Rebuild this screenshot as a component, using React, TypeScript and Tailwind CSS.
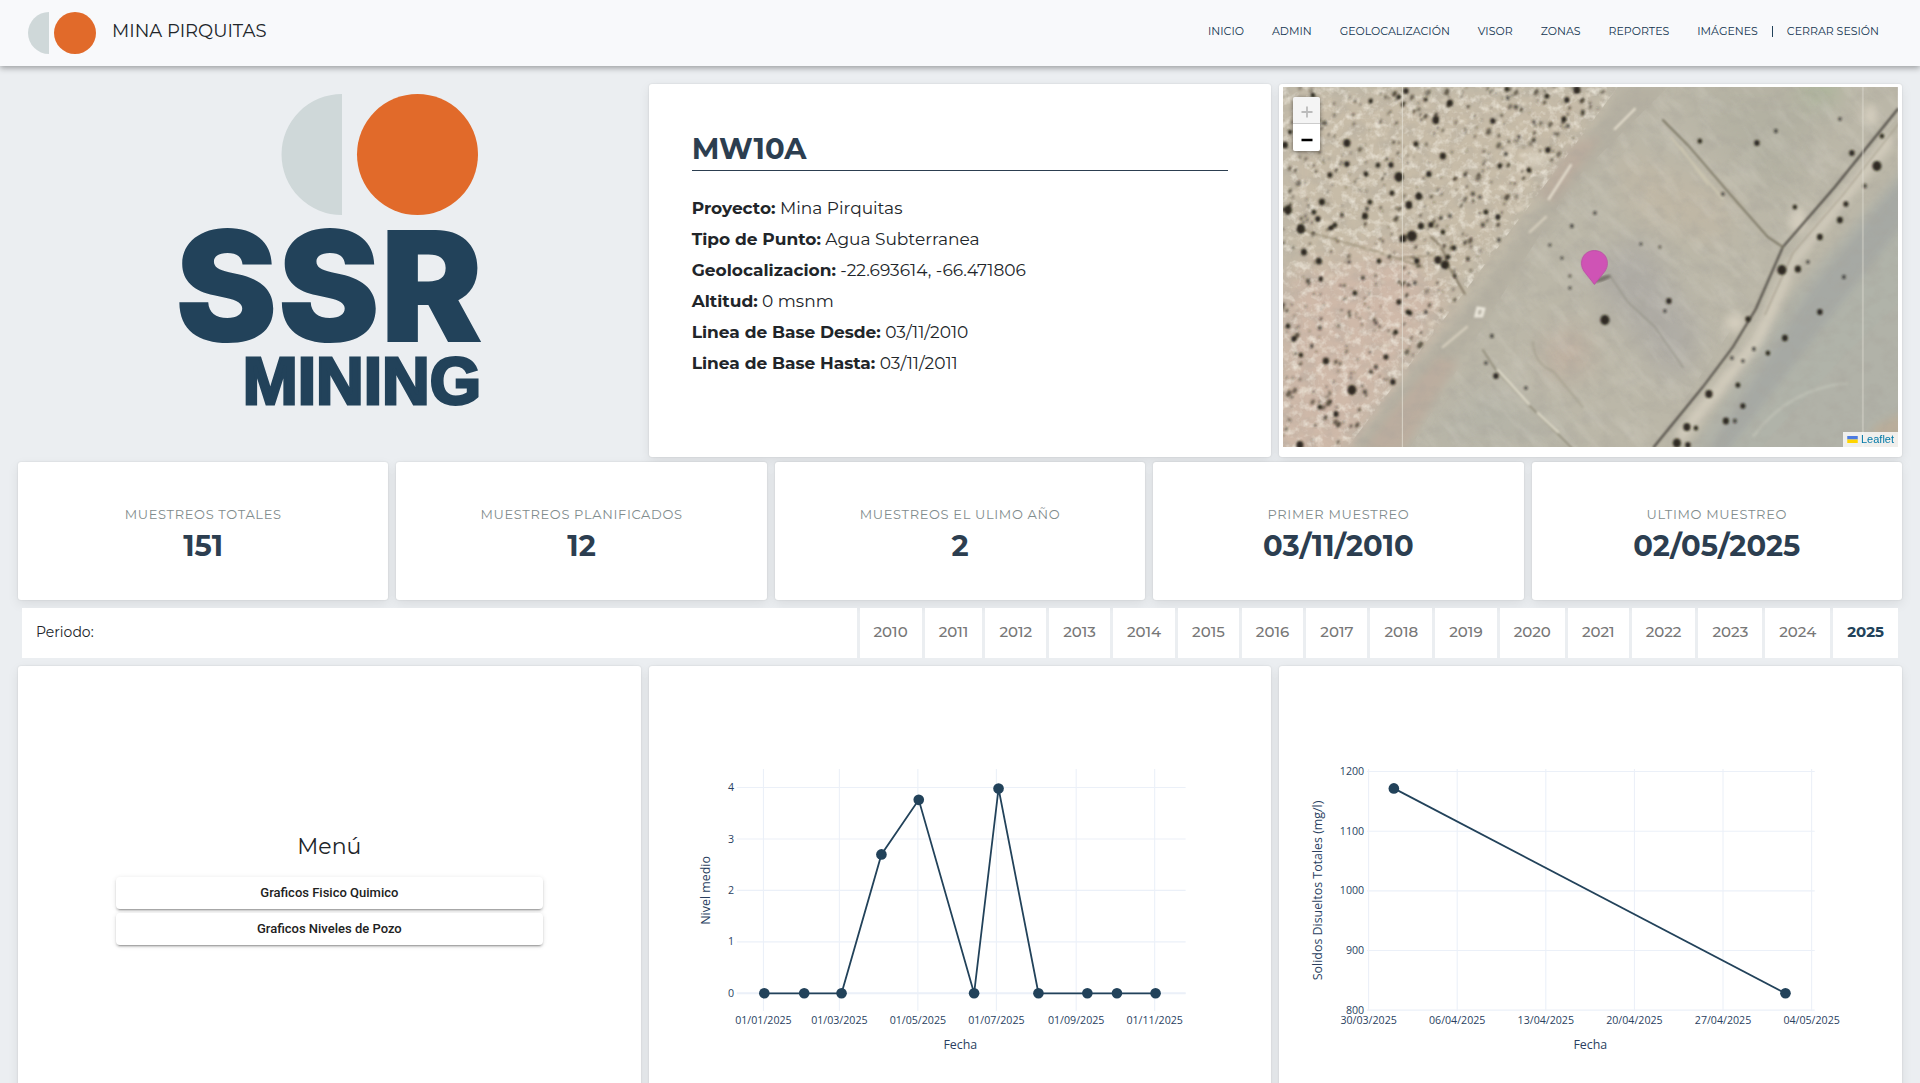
import { useMemo } from "react";

const NAV_LINKS = ["Inicio", "Admin", "Geolocalización", "Visor", "Zonas", "Reportes", "Imágenes"];

const DETAILS = [
  { label: "Proyecto", value: "Mina Pirquitas" },
  { label: "Tipo de Punto", value: "Agua Subterranea" },
  { label: "Geolocalizacion", value: "-22.693614, -66.471806" },
  { label: "Altitud", value: "0 msnm" },
  { label: "Linea de Base Desde", value: "03/11/2010" },
  { label: "Linea de Base Hasta", value: "03/11/2011" },
];

const STATS = [
  { label: "Muestreos totales", value: "151" },
  { label: "Muestreos planificados", value: "12" },
  { label: "Muestreos el ulimo año", value: "2" },
  { label: "Primer muestreo", value: "03/11/2010" },
  { label: "Ultimo muestreo", value: "02/05/2025" },
];

const YEARS = Array.from({ length: 16 }, (_, i) => 2010 + i);
const CURRENT_YEAR = 2025;

const CARD =
  "rounded-[3px] bg-white shadow-[0_4px_12px_rgba(0,0,0,0.08),0_0_2px_rgba(0,0,0,0.12)]";

function Navbar() {
  return (
    <header className="relative flex h-[66px] items-center justify-between bg-[#f8f9fb] pr-[41px] pl-7 shadow-[0_2px_6px_rgba(0,0,0,0.35)]">
      <a href="#" className="flex items-center gap-4 text-lg text-[#212529]">
        <svg viewBox="0 0 68 42" className="h-[42px] w-[68px]" aria-hidden="true">
          <path d="M21 0A21 21 0 0 0 21 42Z" fill="#cfd8d9" />
          <circle cx="47" cy="21" r="21" fill="#e16a2a" />
        </svg>
        <span className="pb-1">MINA PIRQUITAS</span>
      </a>
      <nav className="flex items-center pb-1 text-[11px] text-[#12344f] uppercase">
        <ul className="flex gap-7">
          {NAV_LINKS.map((link) => (
            <li key={link}>
              <a href="#">{link}</a>
            </li>
          ))}
        </ul>
        <span className="mx-[14px] h-[11px] w-px bg-[#22425a]" />
        <a href="#">Cerrar sesión</a>
      </nav>
    </header>
  );
}

function CompanyLogo() {
  return (
    <div className="flex justify-center pt-[10px]">
      <svg viewBox="0 0 301 314" className="h-[314px] w-[301px] overflow-visible" role="img" aria-label="SSR Mining">
        <path d="M163 0A60.5 60.5 0 0 0 163 121Z" fill="#cfd8d9" />
        <circle cx="238.500" cy="60.500" r="60.500" fill="#e16a2a" />
        <g fill="#22425a" textAnchor="end">
          <text x="304" y="248" fontSize="154" fontWeight="900" fontFamily="Inter, sans-serif">
            SSR
          </text>
          <text
            x="302"
            y="310"
            fontSize="66"
            fontWeight="700"
            fontFamily="'Liberation Sans', Arial, sans-serif"
            stroke="#22425a"
            strokeWidth="3"
          >
            MINING
          </text>
        </g>
      </svg>
    </div>
  );
}

function PointDetails() {
  return (
    <section className={`${CARD} px-[43px] pt-[46px]`}>
      <h1 className="border-b border-[#2c3e50] pb-[2px] text-[29px] leading-[38px] font-bold text-[#2c3e50]">MW10A</h1>
      <ul className="mt-[22px] text-[17px] leading-[31px] text-[#212529]">
        {DETAILS.map((d) => (
          <li key={d.label}>
            <strong>{d.label}:</strong> {d.value}
          </li>
        ))}
      </ul>
    </section>
  );
}

// Larger bushes, placed by hand: x, y, radius
const BUSHES = [
  [18, 142, 5], [5, 123, 4.5], [64, 56, 4], [153, 33, 4], [160, 69, 3.5], [167, 16, 3.5], [123, 4, 3],
  [136, 109, 4], [126, 118, 4], [116, 90, 5], [108, 78, 3], [146, 87, 3], [129, 149, 5.5], [120, 152, 4],
  [155, 173, 4], [162, 178, 4.5], [21, 165, 3.5], [36, 174, 3.5], [39, 115, 3.5], [35, 132, 3], [82, 129, 3.5],
  [48, 141, 3], [43, 274, 3.5], [69, 303, 5], [110, 295, 3], [18, 268, 2.5], [294, 3, 4], [284, 13, 3], [210, 34, 3],
  [2, 58, 3.5], [7, 45, 2.5], [47, 88, 2.8], [64, 77, 3], [83, 87, 2.8], [138, 139, 3.5], [148, 138, 3],
  [133, 57, 2.8], [160, 145, 2.5], [109, 106, 2.8], [213, 289, 3], [209, 249, 2.2], [203, 276, 2], [17, 358, 4],
  [31, 125, 2.6], [52, 138, 2.6], [59, 128, 2.4], [96, 174, 2.6], [66, 175, 2], [80, 191, 2.4], [38, 192, 2.8],
  [25, 194, 2.4], [5, 239, 2.6], [11, 252, 3], [72, 206, 2.6], [95, 78, 2.6], [84, 122, 2.4], [87, 115, 2.6],
  [171, 161, 2.8], [158, 131, 2.4], [167, 129, 2.4], [203, 125, 2.6], [215, 130, 3], [217, 79, 2.8], [190, 107, 2.4],
  [246, 83, 2.6], [265, 63, 3], [251, 53, 2.4], [223, 67, 2.2], [113, 245, 2.6], [125, 225, 2.6], [143, 225, 2.2],
  [103, 270, 2.8], [93, 280, 2.4], [88, 285, 2.4], [53, 327, 3], [37, 320, 2.6], [82, 305, 2.4], [37, 241, 2.4],
  [29, 259, 2.2], [93, 236, 2], [116, 215, 2.8], [127, 226, 2.6], [134, 174, 3], [172, 189, 2.4], [165, 170, 2.6],
  [132, 196, 2.2], [185, 172, 2.4], [200, 138, 2.4], [216, 153, 2.2], [88, 14, 2.6], [30, 8, 2.6], [42, 36, 2.4],
  [116, 10, 2.6], [143, 13, 2.4], [224, 2, 2.6], [225, 11, 2.2], [233, 20, 2.4], [264, 9, 2.6], [281, 32, 2.8],
  [300, 25, 2.4], [285, 39, 2.4], [251, 35, 2], [236, 50, 2], [182, 88, 2], [197, 110, 2],
  [322, 233, 5], [386, 214, 3], [382, 224, 2], [312, 126, 2], [440, 107, 2], [417, 54, 2.5], [474, 56, 3],
  [493, 44, 2.2], [512, 120, 2.5], [569, 66, 3], [594, 79, 5], [557, 32, 2], [563, 117, 2.8], [557, 133, 3.2],
  [537, 150, 3.2], [499, 183, 5], [515, 182, 3.5], [525, 175, 2], [561, 190, 2.2], [537, 225, 3], [502, 251, 3.2],
  [485, 266, 2.5], [471, 262, 2.2], [465, 232, 2.8], [455, 298, 2.6], [426, 307, 4], [460, 319, 2.8],
  [443, 334, 3.4], [452, 334, 2.4], [404, 340, 4], [413, 341, 2.5], [394, 356, 4.5], [405, 358, 3],
  [449, 271, 2], [460, 274, 2], [599, 49, 2.5], [582, 99, 2.4], [358, 157, 1.8], [377, 160, 1.6],
  [289, 139, 2.2], [267, 158, 1.8], [279, 171, 1.8], [287, 189, 1.6], [287, 201, 1.8], [243, 301, 2],
];

// x of the scrubland's right edge at height y
const scrubEdge = (y: number) => (y < 70 ? 335 - y * 0.75 : 283 - (y - 70) * 0.75);

function SatelliteImage() {
  const { shrubs, stones } = useMemo(() => {
    let seed = 7;
    const rand = () => {
      seed = (seed * 16807) % 2147483647;
      return seed / 2147483647;
    };
    const shrubs: number[][] = [];
    const stones: number[][] = [];
    for (let i = 0; i < 1150; i++) {
      const x = rand() * 335;
      const y = rand() * 360;
      const r = 0.8 + rand() * rand() * 1.8;
      if (x < scrubEdge(y) - 4) (i % 3 === 0 ? stones : shrubs).push([x, y, r, rand()]);
    }
    return { shrubs, stones };
  }, []);

  return (
    <svg viewBox="0 0 615 360" preserveAspectRatio="xMidYMid slice" className="block h-[360px] w-full" aria-hidden="true">
      <defs>
        <filter id="soft"><feGaussianBlur stdDeviation="0.8" /></filter>
        <filter id="haze"><feGaussianBlur stdDeviation="4" /></filter>
        <filter id="broad"><feGaussianBlur stdDeviation="14" /></filter>
        <filter id="grain" x="0" y="0" width="100%" height="100%">
          <feTurbulence type="fractalNoise" baseFrequency="0.06 0.08" numOctaves="4" seed="4" />
          <feColorMatrix values="0 0 0 0 0.38  0 0 0 0 0.36  0 0 0 0 0.32  1.8 0 0 0 -0.75" />
        </filter>
        <filter id="streak" x="0" y="0" width="100%" height="100%">
          <feTurbulence type="fractalNoise" baseFrequency="0.025 0.08" numOctaves="4" seed="9" />
          <feColorMatrix values="0 0 0 0 0.86  0 0 0 0 0.84  0 0 0 0 0.77  2 0 0 0 -0.85" />
        </filter>
        <filter id="glint" x="0" y="0" width="100%" height="100%">
          <feTurbulence type="fractalNoise" baseFrequency="0.12" numOctaves="3" seed="11" />
          <feColorMatrix values="0 0 0 0 0.9  0 0 0 0 0.86  0 0 0 0 0.77  2.4 0 0 0 -1.1" />
        </filter>
        <clipPath id="scrub"><path d="M0 0H335L283 70L65 360H0Z" /></clipPath>
        <clipPath id="field"><path d="M385 0H615V30L500 165L370 360H128L215 215L290 95Z" /></clipPath>
      </defs>
      <rect width="615" height="360" fill="#bbb7a8" />

      <g filter="url(#broad)">
        <path d="M0 0H335L283 70L65 360H0Z" fill="#c7bca8" />
        <path d="M0 190L120 160L165 215L60 380H-20Z" fill="#cfb9a9" />
        <path d="M400 0H560L500 120L440 60Z" fill="#b3b1a2" />
        <path d="M300 180L360 150L420 250L390 300Z" fill="#afaca5" />
        <path d="M260 255L295 240L310 280L270 290Z" fill="#bfae9f" />
        <path d="M130 360L200 290L300 360Z" fill="#b5b4a7" />
        <path d="M330 60L450 110L440 160L350 130Z" fill="#bfb7a5" />
        <circle cx="537" cy="0" r="12" fill="#9db98c" />
      </g>

      {/* dry river bed */}
      <g filter="url(#haze)">
        <path d="M625 75L510 205L400 375H630Z" fill="#b1b2a8" />
        <path d="M622 88L530 200L425 365H446L540 240L622 135Z" fill="#a6a9a4" />
        <path d="M622 135L540 240L440 370H470L560 270L622 210Z" fill="#b0b3a9" />
        <path d="M590 340L620 325V370H588Z" fill="#b9ad9a" />
      </g>
      <path d="M470 350Q505 302 565 296" fill="none" stroke="#bbbdb2" strokeWidth="3" filter="url(#soft)" />

      {/* road */}
      <g filter="url(#haze)">
        <path d="M340 0H386L298 95L222 205L165 285L118 365H66L125 290L195 210L272 100Z" fill="#b5b0a2" />
        <path d="M290 55L318 50L272 115L254 108Z" fill="#bbad9f" />
        <path d="M105 330L155 270L175 275L120 365H80Z" fill="#bbad9f" />
      </g>

      <rect width="615" height="360" filter="url(#grain)" opacity="0.4" />
      <g clipPath="url(#field)">
        <rect x="0" y="-300" width="800" height="800" filter="url(#streak)" opacity="0.2" transform="rotate(48 300 180)" />
      </g>
      <g clipPath="url(#scrub)">
        <rect width="340" height="360" filter="url(#glint)" opacity="0.7" />
      </g>

      {/* pale spots along the track */}
      <g fill="#ddd6c6" filter="url(#haze)" opacity="0.75">
        <ellipse cx="253" cy="72" rx="12" ry="7" />
        <ellipse cx="516" cy="133" rx="9" ry="13" />
        <ellipse cx="452" cy="236" rx="10" ry="9" />
        <ellipse cx="588" cy="28" rx="8" ry="10" />
        <path d="M606 45L505 175L470 250L390 350L400 355L480 255L515 175L612 55Z" />
      </g>

      <g fill="none" strokeLinecap="round" filter="url(#soft)">
        <path d="M615 22L552 100L500 160L473 222L450 260L420 300L371 360" stroke="#4e4a43" strokeWidth="2" />
        <path d="M380 33L405 58L448 108L485 150L500 160" stroke="#77725f" strokeWidth="1.8" />
        <path d="M618 34L560 108L510 166L482 228" stroke="#9b9380" strokeWidth="1" />
        <path d="M200 263L213 283L248 320L290 362" stroke="#8b8673" strokeWidth="1.4" />
        <path d="M215 283L246 317M255 326L275 345" stroke="#e0dccb" strokeWidth="2.2" />
        <path d="M398 60L425 98M388 50L440 112" stroke="#cbc5b0" strokeWidth="2" />
        <path d="M288 78L266 112M352 22L332 42" stroke="#e3dccc" strokeWidth="2.4" />
        <path d="M263 130L247 145M184 240L160 260" stroke="#d3ccbb" strokeWidth="2.6" />
        <path d="M20 143L50 152L95 165L140 180M118 171L150 168" stroke="#9b9078" strokeWidth="1.5" />
        <path d="M148 150Q162 160 165 178L182 207" stroke="#7b705a" strokeWidth="1.6" />
        <path d="M328 190L345 215L372 240L400 280" stroke="#8e8b80" strokeWidth="2" opacity="0.5" />
        <path d="M250 255Q252 278 270 284L300 320" stroke="#8f8b78" strokeWidth="2.4" opacity="0.35" />
        <path d="M195 221L201 222L199 229L193 229Z" stroke="#ebe7db" strokeWidth="3" />
      </g>

      <g filter="url(#soft)">
        {stones.map(([x, y, r], i) => (
          <ellipse key={i} cx={x} cy={y} rx={r * 1.8} ry={r * 1.1} fill="#e6dcc9" opacity="0.5" />
        ))}
        {shrubs.map(([x, y, r, tone], i) => (
          <ellipse
            key={i}
            cx={x}
            cy={y}
            rx={r}
            ry={r * 1.5}
            fill="#352d1e"
            opacity={0.3 + tone * 0.5}
            transform={`rotate(30 ${x} ${y})`}
          />
        ))}
        {BUSHES.map(([x, y, r], i) => (
          <ellipse key={i} cx={x} cy={y} rx={r * 0.9} ry={r} fill="#221f14" opacity={r > 2.4 ? 0.92 : 0.65} />
        ))}
      </g>

      {/* tile seams */}
      <path d="M119.500 0V360M580 0V360" stroke="#e4e0d6" strokeWidth="1" opacity="0.75" />

      <ellipse cx="320" cy="192" rx="9" ry="2.5" fill="#3f3b32" opacity="0.5" filter="url(#soft)" transform="rotate(-20 319 193)" />
      <path
        d="M311.500 163.500C304 163.500 298.500 169 298.500 176.300C298.500 179.500 299.600 181.800 301 184.200L311.500 197.500L322 184.200C323.400 181.800 324.500 179.500 324.500 176.300C324.500 169 319 163.500 311.500 163.500Z"
        fill="#cf53b5"
        stroke="#b94aa2"
        strokeWidth="0.8"
      />
    </svg>
  );
}

function PointMap() {
  return (
    <section className={`${CARD} px-1 pt-[3px] pb-[10px]`}>
      <div className="relative">
        <SatelliteImage />
        <div className="absolute top-[10px] left-[10px] flex w-[27px] flex-col overflow-hidden rounded-[2px] shadow-[0_1px_4px_rgba(0,0,0,0.5)]">
          <button
            type="button"
            aria-label="Acercar"
            disabled
            className="flex h-[27px] items-center justify-center border-b border-[#ccc] bg-[#f4f4f4] pt-1"
          >
            <svg viewBox="0 0 12 12" className="size-3" aria-hidden="true">
              <path d="M6 0.500V11.500M0.500 6H11.500" stroke="#bbb" strokeWidth="1.800" />
            </svg>
          </button>
          <button type="button" aria-label="Alejar" className="flex h-[27px] items-center justify-center bg-white pt-1">
            <svg viewBox="0 0 12 12" className="size-3" aria-hidden="true">
              <path d="M0.500 6H11.500" stroke="#000" strokeWidth="2.500" />
            </svg>
          </button>
        </div>
        <div className="absolute right-0 bottom-0 flex h-[15px] items-center bg-white/80 px-1 font-['Liberation_Sans',sans-serif] text-[11px]">
          <a href="https://leafletjs.com" className="flex items-center gap-[3px] text-[#0078a8]">
            <svg viewBox="0 0 12 8" className="h-[7px] w-[11px]" aria-hidden="true">
              <path fill="#4c7be1" d="M0 0h12v4H0z" />
              <path fill="#ffd500" d="M0 4h12v4H0z" />
            </svg>
            Leaflet
          </a>
        </div>
      </div>
    </section>
  );
}

function StatCard({ label, value }: { label: string; value: string }) {
  return (
    <div className={`${CARD} flex h-[138px] flex-col items-center justify-center pt-[6px] text-center`}>
      <p className="text-[13px] leading-6 tracking-wider text-[#7f8c8d] uppercase">{label}</p>
      <p className="text-[29px] leading-10 font-bold text-[#2c3e50]">{value}</p>
    </div>
  );
}

function PeriodBar() {
  return (
    <div className="my-2 flex h-[50px] gap-[3px] px-1">
      <div className="flex flex-1 items-center bg-white px-[14px] pb-[2px] text-sm text-[#212529]">Periodo:</div>
      {YEARS.map((year) => (
        <button
          key={year}
          type="button"
          className={
            year === CURRENT_YEAR
              ? "bg-white px-[14px] pb-[2px] text-[15px] font-bold text-[#22425a]"
              : "bg-white px-[14px] pb-[2px] text-[15px] font-medium text-[#777]"
          }
        >
          {year}
        </button>
      ))}
    </div>
  );
}

function Menu() {
  return (
    <section className={`${CARD} flex flex-col items-stretch justify-center gap-1 px-[98px] pb-1`}>
      <h2 className="mb-[10px] text-center text-[22px] leading-8 text-[#212529]">Menú</h2>
      {["Graficos Fisico Quimico", "Graficos Niveles de Pozo"].map((item) => (
        <button
          key={item}
          type="button"
          className="h-8 rounded bg-white font-['Roboto',sans-serif] text-[13px] font-medium text-[#212121] shadow-[0_3px_1px_-2px_rgba(0,0,0,0.2),0_2px_2px_0_rgba(0,0,0,0.14),0_1px_5px_0_rgba(0,0,0,0.12)]"
        >
          {item}
        </button>
      ))}
    </section>
  );
}

type Tick = { at: number; label: string };

type ChartProps = {
  yTitle: string;
  yTitleX: number;
  left: number;
  right: number;
  xTicks: Tick[];
  yTicks: Tick[];
  points: [number, number][];
  zeroLine?: number;
};

function Chart({ yTitle, yTitleX, left, right, xTicks, yTicks, points, zeroLine }: ChartProps) {
  return (
    <section className={CARD}>
      <svg viewBox="0 0 702 504" className="block w-full font-['Open_Sans',sans-serif]" fill="#2a3f5f" role="img" aria-label={yTitle}>
        <g stroke="#ebf0f8" strokeWidth="1.2">
          {xTicks.map((t) => (
            <line key={t.label} x1={t.at} x2={t.at} y1="116" y2="389" />
          ))}
          {yTicks.map((t) => (
            <line key={t.label} x1={left} x2={right} y1={t.at} y2={t.at} />
          ))}
          {zeroLine && <line x1={left} x2={right} y1={zeroLine} y2={zeroLine} strokeWidth="2.4" />}
        </g>
        <polyline points={points.map((p) => p.join(",")).join(" ")} fill="none" stroke="#22425a" strokeWidth="2" />
        {points.map(([x, y]) => (
          <circle key={x} cx={x} cy={y} r="6" fill="#22425a" />
        ))}
        <g fontSize="12">
          {xTicks.map((t) => (
            <text key={t.label} x={t.at} y="404" textAnchor="middle">
              {t.label}
            </text>
          ))}
          {yTicks.map((t) => (
            <text key={t.label} x={left - 3} y={t.at + 4} textAnchor="end">
              {t.label}
            </text>
          ))}
        </g>
        <g fontSize="14" textAnchor="middle">
          <text x="351" y="432">
            Fecha
          </text>
          <text transform={`rotate(-90 ${yTitleX} 253)`} x={yTitleX} y="258">
            {yTitle}
          </text>
        </g>
      </svg>
    </section>
  );
}

// Days since 01/01/2025 and water level
const LEVELS = [
  [0, 0], [31, 0], [60, 0], [91, 2.7], [120, 3.76], [163, 0], [182, 3.98], [213, 0], [251, 0], [274, 0], [304, 0],
];
const dayX = (day: number) => 129 + day * 1.451;
const levelY = (level: number) => 369 - level * 58;

const levelChart: ChartProps = {
  yTitle: "Nivel medio",
  yTitleX: 64,
  left: 99,
  right: 605,
  zeroLine: 369,
  xTicks: [
    { at: dayX(0), label: "01/01/2025" },
    { at: dayX(59), label: "01/03/2025" },
    { at: dayX(120), label: "01/05/2025" },
    { at: dayX(181), label: "01/07/2025" },
    { at: dayX(243), label: "01/09/2025" },
    { at: dayX(304), label: "01/11/2025" },
  ],
  yTicks: [0, 1, 2, 3, 4].map((n) => ({ at: levelY(n), label: String(n) })),
  points: LEVELS.map(([day, level]) => [dayX(day) + 1, levelY(level)]),
};

const solidsChart: ChartProps = {
  yTitle: "Solidos Disueltos Totales (mg/l)",
  yTitleX: 44,
  left: 99,
  right: 604,
  xTicks: ["30/03/2025", "06/04/2025", "13/04/2025", "20/04/2025", "27/04/2025", "04/05/2025"].map((label, i) => ({
    at: 101 + i * 99.9,
    label,
  })),
  yTicks: [800, 900, 1000, 1100, 1200].map((n, i) => ({ at: 388 - i * 67.25, label: String(n) })),
  points: [
    [129.5, 138],
    [571, 369],
  ],
};

export default function App() {
  return (
    <div className="min-h-screen bg-[#ebeef1] font-['Montserrat','Inter',sans-serif] text-[#212529]">
      <Navbar />
      <main className="px-[18px] pt-[18px]">
        <div className="mb-[5px] grid grid-cols-3 gap-2">
          <CompanyLogo />
          <PointDetails />
          <PointMap />
        </div>
        <div className="grid grid-cols-5 gap-2">
          {STATS.map((s) => (
            <StatCard key={s.label} {...s} />
          ))}
        </div>
        <PeriodBar />
        <div className="grid grid-cols-3 gap-2">
          <Menu />
          <Chart {...levelChart} />
          <Chart {...solidsChart} />
        </div>
      </main>
    </div>
  );
}
